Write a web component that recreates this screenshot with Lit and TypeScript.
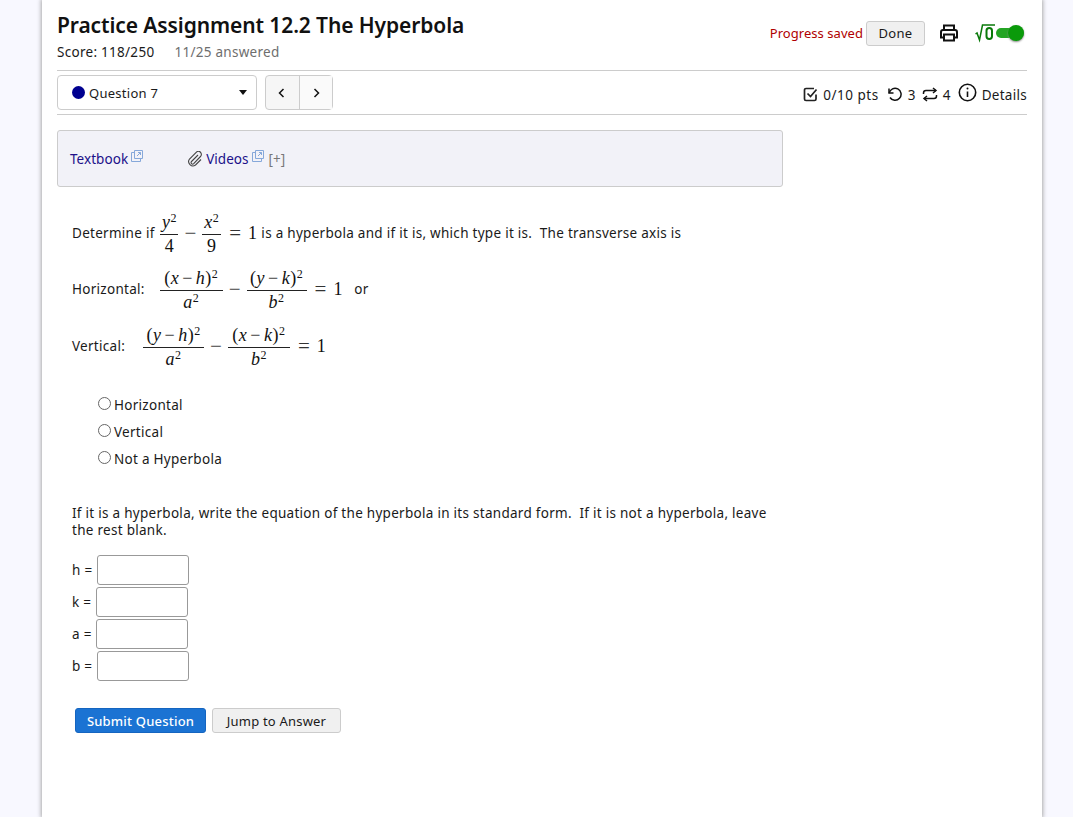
import { LitElement, html, css } from "lit";
import { customElement } from "lit/decorators.js";

const ext = html`<svg class="ext" width="12" height="12" viewBox="0 0 12 12" fill="none" stroke="#86a8da" stroke-width="1"><path d="M3.5 2.5H0.5V11.5H9.5V8.5"/><path d="M3.5 0.5H11.5V8.5H3.5Z"/><path d="M6 6L9.5 2.5M7 2.5H9.5V5"/></svg>`;

const frac = (n: unknown, d: unknown, w: number) =>
  html`<span class="frac" style="width:${w}px"><span class="num">${n}</span><span class="den">${d}</span></span>`;
const sq = html`<sup>2</sup>`;
const i = (s: string) => html`<i>${s}</i>`;
const paren = (a: string, b: string) => html`(${i(a)}<span class="minus">−</span>${i(b)})${sq}`;

@customElement("app-root")
export class AppRoot extends LitElement {
  static styles = css`
    :host { display: block; background: #f8f8ff; font-family: "Noto Sans", sans-serif; font-size: 13.5px; letter-spacing: 0.28px; color: #1a1a1a; overflow: hidden; height: 817px; }
    .card { box-sizing: border-box; width: 1000px; height: 817px; margin-left: 42px; background: #fff; padding: 0 15px; box-shadow: 0 0 4px 1px #aaa; position: relative; }
    .head { display: flex; justify-content: space-between; height: 70px; border-bottom: 1px solid #ccc; }
    h1 { margin: 0; padding-top: 12px; font-size: 21px; line-height: 26px; font-weight: 600; color: #111; letter-spacing: -0.1px; }
    .score { margin-top: 5px; display: flex; gap: 20px; line-height: 18px; }
    .score .g { color: #6e6e6e; }
    .tools { display: flex; align-items: center; height: 20px; margin-top: 23px; }
    .saved { color: #b00000; margin-right: 3px; font-size: 13px; letter-spacing: 0.05px; }
    .done { box-sizing: border-box; width: 59px; height: 25px; border: 1px solid #ccc; border-radius: 3px; background: #f0f0f0; display: flex; align-items: center; justify-content: center; font-size: 13px; }
    .print { margin-left: 15px; }
    .root { margin-left: 17px; display: block; }
    .toggle { width: 28px; height: 10px; border-radius: 5px; background: #24a524; position: relative; margin-right: 3px; }
    .toggle::after { content: ""; position: absolute; right: 0; top: -3px; width: 16px; height: 16px; border-radius: 50%; background: #0a9a0a; box-shadow: 0 1px 2px #888; }
    .bar { display: flex; align-items: center; justify-content: space-between; height: 43px; border-bottom: 1px solid #ccc; }
    .bar-l { display: flex; gap: 8px; }
    .sel { box-sizing: border-box; width: 200px; height: 35px; border: 1px solid #ccc; border-radius: 4px; display: flex; align-items: center; padding: 0 9px 0 14px; }
    .dot { width: 13px; height: 13px; border-radius: 50%; background: #000090; margin-right: 4px; }
    .qt { flex: 1; padding-top: 1px; font-size: 13px; }
    .caret { width: 0; height: 0; border: 4px solid transparent; border-top: 5px solid #111; border-bottom: 0; }
    .nav { display: flex; height: 35px; border: 1px solid #ccc; border-radius: 4px; box-sizing: border-box; width: 68px; background: #f6f6f6; }
    .nav span { flex: 1; display: flex; align-items: center; justify-content: center; }
    .nav span + span { border-left: 1px solid #ccc; background: #fafafa; }
    .stat { display: flex; align-items: center; padding-top: 4px; }
    .stat svg { display: block; }
    .pts { margin: 0 8px 0 5px; letter-spacing: 0.5px; }
    .n3 { margin: 0 6px 0 6px; }
    .n4 { margin: 0 7px 0 5px; }
    .det { margin-left: 5px; }
    .info { margin-top: -5px; }
    .panel { box-sizing: border-box; width: 726px; height: 57px; margin-top: 15px; background: #f2f2f8; border: 1px solid #ccc; border-radius: 3px; display: flex; align-items: center; padding: 1px 0 0 12px; letter-spacing: 0.05px; }
    .panel a { color: #20108a; }
    .ext { margin-left: 3px; position: relative; top: -3px; }
    .plus { color: #777; margin-left: 5px; }
    .clip { margin-left: 44px; margin-right: 3px; }
    .q { width: 696px; padding-left: 15px; }
    .m { display: flex; align-items: center; white-space: pre; }
    .m1 { margin-top: 21px; height: 50px; }
    .m2 { margin-top: 6px; height: 50px; }
    .m3 { margin-top: 7px; height: 50px; }
    .gap1 { width: 2px; }
    .gap2 { width: 15px; }
    .gap3 { width: 18px; }
    .math { font-family: "Liberation Serif", serif; font-size: 18px; letter-spacing: 0.5px; display: inline-flex; align-items: center; color: #111; }
    .frac { display: inline-flex; flex-direction: column; align-items: center; }
    .num { border-bottom: 1px solid #222; width: 100%; text-align: center; height: 25px; line-height: 26px; white-space: nowrap; }
    .den { height: 23px; line-height: 22px; }
    .math sup { font-size: 12px; line-height: 0; vertical-align: 6px; }
    .minus { margin: 0 3px; color: #444; }
    .op { margin: 0 6px; color: #444; font-size: 21px; letter-spacing: 0; }
    .eq { margin: 0 7px 0 8px; color: #333; font-size: 21px; letter-spacing: 0; }
    .opts { margin: 20px 0 0 26px; }
    .opt { display: flex; align-items: center; height: 27px; }
    .radio { box-sizing: border-box; width: 13px; height: 13px; border: 1px solid #666; border-radius: 50%; margin-right: 3px; position: relative; top: -1px; }
    .para { margin: 33px 0 0; line-height: 17px; width: 705px; }
    .fields { margin-top: 15px; }
    .f { display: flex; align-items: center; height: 32px; }
    .f label { width: 25px; }
    .box { box-sizing: border-box; width: 92px; height: 30px; border: 1px solid #999; border-radius: 3px; }
    .f.n .box { margin-left: -1px; }
    .btns { display: flex; gap: 6px; margin: 26px 0 0 3px; }
    .btn { box-sizing: border-box; height: 25px; border-radius: 3px; display: flex; align-items: center; justify-content: center; font-size: 13px; letter-spacing: 0.2px; }
    .sub { width: 131px; background: #1b73d3; color: #fff; border: 1px solid #1565c0; font-weight: 500; }
    .jump { width: 129px; background: #f0f0f0; border: 1px solid #ccc; }
  `;

  render() {
    return html`<div class="card">
      <div class="head">
        <div>
          <h1>Practice Assignment 12.2 The Hyperbola</h1>
          <div class="score"><span>Score: 118/250</span><span class="g">11/25 answered</span></div>
        </div>
        <div class="tools">
          <span class="saved">Progress saved</span>
          <span class="done">Done</span>
          <svg class="print" width="18" height="18" viewBox="0 0 18 18" fill="none" stroke="#111" stroke-width="2"><path d="M4 6V1.5H14V6"/><path d="M4 13.5H1V8a2 2 0 0 1 2-2H15a2 2 0 0 1 2 2V13.5H14"/><path d="M4 10.5H14V16.5H4Z"/></svg>
          <svg class="root" width="21" height="20" viewBox="0 0 21 20" fill="none" stroke="#0a7a0a"><path d="M0.5 11L2 10L4.5 17L7.5 2H20" stroke-width="1.5"/><rect x="11.5" y="5" width="5.5" height="11" rx="2.7" stroke-width="2"/></svg>
          <span class="toggle"></span>
        </div>
      </div>
      <div class="bar">
        <div class="bar-l">
          <div class="sel"><span class="dot"></span><span class="qt">Question 7</span><span class="caret"></span></div>
          <div class="nav">
            <span><svg width="8" height="10" viewBox="0 0 8 10" fill="none" stroke="#111" stroke-width="1.5"><path d="M5.5 1L1.5 5L5.5 9"/></svg></span>
            <span><svg width="8" height="10" viewBox="0 0 8 10" fill="none" stroke="#111" stroke-width="1.5"><path d="M2.5 1L6.5 5L2.5 9"/></svg></span>
          </div>
        </div>
        <div class="stat">
          <svg width="15" height="15" viewBox="0 0 15 15" fill="none" stroke="#222" stroke-width="1.7"><path d="M13 7.5V12a1.5 1.5 0 0 1-1.5 1.5H3A1.5 1.5 0 0 1 1.5 12V3A1.5 1.5 0 0 1 3 1.5H11"/><path d="M4.5 6.5L7.5 9.5L13.5 2.5"/></svg>
          <span class="pts">0/10 pts</span>
          <svg width="15" height="15" viewBox="0 0 15 15" fill="none" stroke="#111" stroke-width="1.5"><path d="M2 1.5V6H6.5"/><path d="M2.2 6A6 6 0 1 1 3 10.5"/></svg>
          <span class="n3">3</span>
          <svg width="16" height="15" viewBox="0 0 16 15" fill="none" stroke="#111" stroke-width="1.5"><path d="M11 1L14 3.5L11 6"/><path d="M14 3.5H4A2.5 2.5 0 0 0 1.5 6V7"/><path d="M5 14L2 11.5L5 9"/><path d="M2 11.5H12A2.5 2.5 0 0 0 14.5 9V8"/></svg>
          <span class="n4">4</span>
          <svg class="info" width="19" height="19" viewBox="0 0 19 19" fill="none" stroke="#111" stroke-width="1.6"><circle cx="9.5" cy="9.5" r="8.2"/><path d="M9.5 8.5V14"/><circle cx="9.5" cy="5.5" r="1" fill="#111" stroke="none"/></svg>
          <span class="det">Details</span>
        </div>
      </div>
      <div class="panel">
        <a>Textbook</a>${ext}
        <svg class="clip" width="16" height="16" viewBox="0 0 16 16" fill="none" stroke="#444" stroke-width="1.1"><path d="M11 4L4.5 10.5a1.5 1.5 0 0 0 2.2 2.2L13.5 5.5a3 3 0 0 0-4.3-4.2L2.5 8a4.3 4.3 0 0 0 6 6L14 8.5"/></svg>
        <a>Videos</a>${ext}<span class="plus">[+]</span>
      </div>
      <div class="q">
        <div class="m m1">Determine if <span class="gap1"></span><span class="math">${frac(html`${i("y")}${sq}`, "4", 18)}<span class="op">−</span>${frac(html`${i("x")}${sq}`, "9", 19)}<span class="eq">=</span>1</span> is a hyperbola and if it is, which type it is.&nbsp; The transverse axis is</div>
        <div class="m m2">Horizontal:<span class="gap2"></span><span class="math">${frac(paren("x", "h"), html`${i("a")}${sq}`, 63)}<span class="op">−</span>${frac(paren("y", "k"), html`${i("b")}${sq}`, 60)}<span class="eq">=</span>1</span>   or</div>
        <div class="m m3">Vertical:<span class="gap3"></span><span class="math">${frac(paren("y", "h"), html`${i("a")}${sq}`, 61)}<span class="op">−</span>${frac(paren("x", "k"), html`${i("b")}${sq}`, 62)}<span class="eq">=</span>1</span></div>
        <div class="opts">
          <div class="opt"><span class="radio"></span>Horizontal</div>
          <div class="opt"><span class="radio"></span>Vertical</div>
          <div class="opt"><span class="radio"></span>Not a Hyperbola</div>
        </div>
        <p class="para">If it is a hyperbola, write the equation of the hyperbola in its standard form.&nbsp; If it is not a hyperbola, leave the rest blank.</p>
        <div class="fields">
          <div class="f"><label>h =</label><span class="box"></span></div>
          <div class="f n"><label>k =</label><span class="box"></span></div>
          <div class="f n"><label>a =</label><span class="box"></span></div>
          <div class="f"><label>b =</label><span class="box"></span></div>
        </div>
        <div class="btns"><span class="btn sub">Submit Question</span><span class="btn jump">Jump to Answer</span></div>
      </div>
    </div>`;
  }
}
